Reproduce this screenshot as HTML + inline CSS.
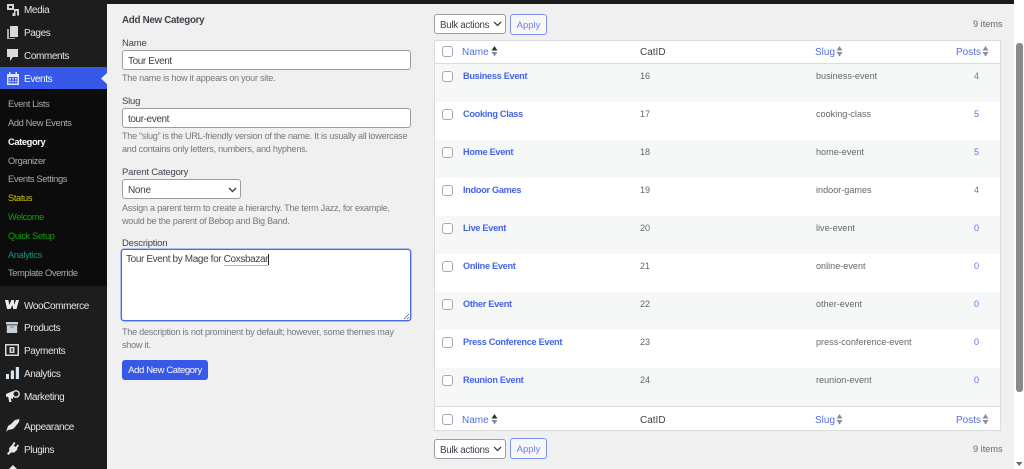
<!DOCTYPE html>
<html><head><meta charset="utf-8"><style>
*{box-sizing:border-box}
html,body{margin:0;padding:0;width:1024px;height:469px;overflow:hidden;background:#f0f0f1;font-family:"Liberation Sans",sans-serif;font-size:9.5px;color:#3c434a}
#w{position:absolute;left:0;top:0;width:1024px;height:469px;filter:blur(.35px)}
div,a{position:absolute;white-space:nowrap}
.m{left:24px;color:#e4e4e4;font-size:10px;line-height:14px;height:14px;letter-spacing:-.4px}
.s{left:8px;color:#a8adb2;font-size:9.3px;line-height:12px;height:12px;letter-spacing:-.37px}
svg{position:absolute;display:block}
.lab{left:122px;font-size:9.5px;line-height:12px;color:#3c434a;letter-spacing:-.2px}
.hint{left:122px;font-size:9.1px;line-height:13px;color:#73787d;letter-spacing:-.26px}
.inp{left:122px;width:289px;height:20px;background:#fff;border:1px solid #9a9da2;border-radius:3px;font-size:10px;line-height:22px;padding-left:5px;color:#3c434a;letter-spacing:-.4px}
.sel{height:20px;background:#fff;border:1px solid #9a9da2;border-radius:3px;font-size:10px;line-height:21px;padding-left:5px;color:#3c434a;letter-spacing:-.3px}
.apply{width:37px;height:21px;background:#f6f7f7;border:1px solid #7d92f0;border-radius:3px;color:#6a82ee;font-size:9.5px;line-height:22px;text-align:center}
.row{left:435px;width:565px;height:38px}
.cb{width:11px;height:11px;background:#fff;border:1px solid #a7aaad;border-radius:3px;left:442px}
.n{left:463px;font-weight:bold;color:#4564ea;font-size:9.2px;line-height:12px;letter-spacing:-.3px}
.c{left:640px;color:#63686e;font-size:9.1px;line-height:12px}
.g{left:816px;color:#63686e;font-size:9.1px;line-height:12px}
.p{color:#5a75ee;font-size:9.1px;line-height:12px;left:974px}
.h{color:#5270ec;font-size:10px;line-height:13px;margin-top:1px}
.hc{color:#3c434a;font-size:10px;line-height:13px;left:640px;margin-top:1px}
.items{font-size:9.2px;color:#63686e;line-height:12px;left:973px}
</style></head><body><div id="w">

<div style="left:0;top:0;width:1014px;height:4px;background:#1a1a1a"></div>
<div style="left:1014px;top:0;width:10px;height:469px;background:#fff"></div>
<div style="left:1016px;top:43px;width:7px;height:349px;background:#8a8a8a;border-radius:3px"></div>
<svg style="left:1016px;top:462px" width="7" height="5"><path d="M0 0H6.5L3.2 4z" fill="#6a6a6a"/></svg>

<!-- sidebar -->
<div style="left:0;top:0;width:107px;height:469px;background:#1d1d1d"></div>
<div style="left:0;top:89px;width:107px;height:197px;background:#0c0c0c"></div>
<div style="left:0;top:67px;width:107px;height:22px;background:#3858e9"></div>
<svg style="left:101px;top:73px" width="6" height="11"><path d="M6 0V11L0 5.5z" fill="#f0f0f1"/></svg>

<svg style="left:6px;top:3px" width="14" height="14" viewBox="0 0 14 14"><path d="M1 1H8V7H1zM3 3V5H6V3z" fill="#d5d5d5" fill-rule="evenodd"/><path d="M8 6H13V12.5H11V8H9.5V13H6.5V10H8z" fill="#d5d5d5"/></svg>
<svg style="left:7px;top:26px" width="12" height="13" viewBox="0 0 12 13"><path d="M0 3H2V12H8V13H0z" fill="#a8a8a8"/><path d="M3 0H11V11H3z" fill="#d8d8d8"/></svg>
<svg style="left:7px;top:49px" width="12" height="13" viewBox="0 0 12 13"><path d="M0 0H11V8H6L3 12V8H0z" fill="#dcdcdc"/></svg>
<svg style="left:6px;top:72px" width="14" height="13" viewBox="0 0 14 13"><path d="M1 2H3V0H4.5V2H9.5V0H11V2H13V13H1zM2.5 5V11.5H11.5V5z" fill="#dfe6ff" fill-rule="evenodd"/><path d="M3.5 6H5V7.5H3.5zM6.3 6H7.8V7.5H6.3zM9 6H10.5V7.5H9zM3.5 8.8H5V10.3H3.5zM6.3 8.8H7.8V10.3H6.3zM9 8.8H10.5V10.3H9z" fill="#dfe6ff"/></svg>

<div class="m" style="top:4px">Media</div>
<div class="m" style="top:27px">Pages</div>
<div class="m" style="top:50px">Comments</div>
<div class="m" style="top:73px;color:#fff">Events</div>

<div class="s" style="top:97.5px">Event Lists</div>
<div class="s" style="top:116.5px">Add New Events</div>
<div class="s" style="top:135.5px;color:#fff;font-weight:bold">Category</div>
<div class="s" style="top:154.5px">Organizer</div>
<div class="s" style="top:172.5px">Events Settings</div>
<div class="s" style="top:191.5px;color:#c8c800">Status</div>
<div class="s" style="top:210.5px;color:#10a010">Welcome</div>
<div class="s" style="top:229.5px;color:#10a010">Quick Setup</div>
<div class="s" style="top:248.5px;color:#1a8f80">Analytics</div>
<div class="s" style="top:266.5px">Template Override</div>

<svg style="left:5px;top:300px" width="14" height="9" viewBox="0 0 14 9"><path d="M0 0H3.4L4.3 5 6.3 0H8.8L9.6 5 10.8 0H14L11.5 9H8.2L7.4 5 5.4 9H2z" fill="#ececec"/></svg>
<svg style="left:6px;top:322px" width="12" height="11" viewBox="0 0 12 11"><path d="M0 0H12V2.5H0zM.8 3.2H11.2V11H.8z" fill="#c8d0d6"/><path d="M4 4.6H8V5.4H4z" fill="#777"/></svg>
<svg style="left:5px;top:344px" width="14" height="12" viewBox="0 0 14 12"><path d="M0 0H14V12H0zM1.5 1.5V10.5H12.5V1.5z" fill="#d8d8d8" fill-rule="evenodd"/><path d="M4.5 3H9.5V9H4.5z" fill="#d8d8d8"/><path d="M6 4.5H8V5.3H6.8V5.8H8V7.5H6V6.7H7.2V6.3H6z" fill="#1d1d1d"/></svg>
<svg style="left:6px;top:367px" width="13" height="12" viewBox="0 0 13 12"><path d="M0 7H3V12H0zM4.8 3.5H8V12H4.8zM9.8 0H13V12H9.8z" fill="#dbe5f0"/></svg>
<svg style="left:6px;top:389px" width="14" height="14" viewBox="0 0 14 14"><path d="M0 5L7 2V10L4.8 9.2 5.5 13H3.2L2.3 8.2 0 7.5z" fill="#e8e8e8"/><circle cx="10" cy="5" r="3.2" fill="none" stroke="#e8e8e8" stroke-width="1.4"/></svg>
<svg style="left:6px;top:419px" width="14" height="13" viewBox="0 0 14 13"><path d="M0 13L2 7 5 5 9 1 13.5 0 13 3 9 8 7 10 2 11z" fill="#e8e8e8"/></svg>
<svg style="left:7px;top:442px" width="12" height="13" viewBox="0 0 12 13"><path d="M7 0L8.5 1 6.7 3.6 8.7 5 10.6 2.4 12 3.5 10 6.2 10.8 7 7.4 10.5H4L1.5 13 0 11.5 2.2 9.2V6L5 3z" fill="#e8e8e8"/></svg>
<svg style="left:9px;top:465px" width="8" height="4" viewBox="0 0 8 4"><path d="M4 0L8 4H0z" fill="#e8e8e8"/></svg>

<div class="m" style="top:300px">WooCommerce</div>
<div class="m" style="top:322px">Products</div>
<div class="m" style="top:345px">Payments</div>
<div class="m" style="top:368px">Analytics</div>
<div class="m" style="top:391px">Marketing</div>
<div class="m" style="top:421px">Appearance</div>
<div class="m" style="top:444px">Plugins</div>

<!-- form -->
<div class="lab" style="top:15px;font-weight:bold;font-size:9.8px;letter-spacing:-.3px">Add New Category</div>
<div class="lab" style="top:38px">Name</div>
<div class="inp" style="top:50px">Tour Event</div>
<div class="hint" style="top:72px">The name is how it appears on your site.</div>
<div class="lab" style="top:96px">Slug</div>
<div class="inp" style="top:108px">tour-event</div>
<div class="hint" style="top:130px">The “slug” is the URL-friendly version of the name. It is usually all lowercase</div>
<div class="hint" style="top:143px">and contains only letters, numbers, and hyphens.</div>
<div class="lab" style="top:167px">Parent Category</div>
<div class="sel" style="left:122px;top:179px;width:119px">None</div>
<svg style="left:228px;top:187px" width="9" height="6"><path d="M1 1L4.5 4.5 8 1" fill="none" stroke="#3c434a" stroke-width="1.4"/></svg>
<div class="hint" style="top:202px">Assign a parent term to create a hierarchy. The term Jazz, for example,</div>
<div class="hint" style="top:215px">would be the parent of Bebop and Big Band.</div>
<div class="lab" style="top:237.5px">Description</div>
<div style="left:121px;top:249px;width:290px;height:72px;background:#fff;border:1px solid #4a68ea;box-shadow:0 0 0 .5px #6f86ee;border-radius:3px;font-size:10px;line-height:14px;padding:3px 4px;color:#3c434a;letter-spacing:-.37px">Tour Event by Mage for <span style="border-bottom:1.5px solid #f0b429">Coxsbazar</span><span style="border-left:1px solid #222"></span></div>
<svg style="left:403px;top:313px" width="7" height="7"><path d="M1 6L6 1M4 6L6 4" stroke="#666" stroke-width=".8"/></svg>
<div class="hint" style="top:326px">The description is not prominent by default; however, some themes may</div>
<div class="hint" style="top:339px">show it.</div>
<div style="left:122px;top:360px;width:86px;height:20px;background:#3858e9;border-radius:3px;color:#fff;font-size:9.5px;line-height:21px;text-align:center;letter-spacing:-.38px">Add New Category</div>

<!-- top actions -->
<div class="sel" style="left:434px;top:14px;width:72px;height:20px;font-size:9.8px">Bulk actions</div>
<svg style="left:493px;top:21px" width="9" height="6"><path d="M1 1L4.5 4.5 8 1" fill="none" stroke="#3c434a" stroke-width="1.3"/></svg>
<div class="apply" style="left:510px;top:14px">Apply</div>
<div class="items" style="top:18px">9 items</div>

<!-- table -->
<div style="left:434px;top:40px;width:567px;height:391px;background:#fff;border:1px solid #dcdcde"></div>
<div style="left:435px;top:63px;width:565px;height:1px;background:#dcdcde"></div>
<div class="row" style="top:64px;background:#f6f7f7"></div>
<div class="row" style="top:140px;background:#f6f7f7"></div>
<div class="row" style="top:216px;background:#f6f7f7"></div>
<div class="row" style="top:292px;background:#f6f7f7"></div>
<div class="row" style="top:368px;background:#f6f7f7"></div>
<div style="left:435px;top:406px;width:565px;height:1px;background:#dcdcde"></div>

<div class="cb" style="top:46px"></div>
<div class="h" style="left:462px;top:45px">Name</div>
<svg style="left:491px;top:46px" width="7" height="11"><path d="M3.5 0L6.5 4.5H.5z" fill="#2c3338"/><path d="M3.5 10.5L.5 6H6.5z" fill="#8c8f94"/></svg>
<div class="hc" style="top:45px">CatID</div>
<div class="h" style="left:815px;top:45px">Slug</div>
<svg style="left:836px;top:46px" width="7" height="11"><path d="M3.5 0L6.5 4.5H.5zM3.5 10.5L.5 6H6.5z" fill="#8c8f94"/></svg>
<div class="h" style="left:956px;top:45px">Posts</div>
<svg style="left:982px;top:46px" width="7" height="11"><path d="M3.5 0L6.5 4.5H.5zM3.5 10.5L.5 6H6.5z" fill="#8c8f94"/></svg>

<div class="cb" style="top:71px"></div><div class="n" style="top:70px">Business Event</div><div class="c" style="top:70px">16</div><div class="g" style="top:70px">business-event</div><div class="p" style="top:70px">4</div>
<div class="cb" style="top:109px"></div><div class="n" style="top:108px">Cooking Class</div><div class="c" style="top:108px">17</div><div class="g" style="top:108px">cooking-class</div><div class="p" style="top:108px">5</div>
<div class="cb" style="top:147px"></div><div class="n" style="top:146px">Home Event</div><div class="c" style="top:146px">18</div><div class="g" style="top:146px">home-event</div><div class="p" style="top:146px">5</div>
<div class="cb" style="top:185px"></div><div class="n" style="top:184px">Indoor Games</div><div class="c" style="top:184px">19</div><div class="g" style="top:184px">indoor-games</div><div class="p" style="top:184px">4</div>
<div class="cb" style="top:223px"></div><div class="n" style="top:222px">Live Event</div><div class="c" style="top:222px">20</div><div class="g" style="top:222px">live-event</div><div class="p" style="top:222px">0</div>
<div class="cb" style="top:261px"></div><div class="n" style="top:260px">Online Event</div><div class="c" style="top:260px">21</div><div class="g" style="top:260px">online-event</div><div class="p" style="top:260px">0</div>
<div class="cb" style="top:299px"></div><div class="n" style="top:298px">Other Event</div><div class="c" style="top:298px">22</div><div class="g" style="top:298px">other-event</div><div class="p" style="top:298px">0</div>
<div class="cb" style="top:337px"></div><div class="n" style="top:336px">Press Conference Event</div><div class="c" style="top:336px">23</div><div class="g" style="top:336px">press-conference-event</div><div class="p" style="top:336px">0</div>
<div class="cb" style="top:375px"></div><div class="n" style="top:374px">Reunion Event</div><div class="c" style="top:374px">24</div><div class="g" style="top:374px">reunion-event</div><div class="p" style="top:374px">0</div>

<div class="cb" style="top:414px"></div>
<div class="h" style="left:462px;top:413px">Name</div>
<svg style="left:491px;top:414px" width="7" height="11"><path d="M3.5 0L6.5 4.5H.5z" fill="#2c3338"/><path d="M3.5 10.5L.5 6H6.5z" fill="#8c8f94"/></svg>
<div class="hc" style="top:413px">CatID</div>
<div class="h" style="left:815px;top:413px">Slug</div>
<svg style="left:836px;top:414px" width="7" height="11"><path d="M3.5 0L6.5 4.5H.5zM3.5 10.5L.5 6H6.5z" fill="#8c8f94"/></svg>
<div class="h" style="left:956px;top:413px">Posts</div>
<svg style="left:982px;top:414px" width="7" height="11"><path d="M3.5 0L6.5 4.5H.5zM3.5 10.5L.5 6H6.5z" fill="#8c8f94"/></svg>

<div class="sel" style="left:434px;top:439px;width:72px;height:20px;font-size:9.8px">Bulk actions</div>
<svg style="left:493px;top:446px" width="9" height="6"><path d="M1 1L4.5 4.5 8 1" fill="none" stroke="#3c434a" stroke-width="1.3"/></svg>
<div class="apply" style="left:510px;top:438px">Apply</div>
<div class="items" style="top:443px">9 items</div>

</div></body></html>
